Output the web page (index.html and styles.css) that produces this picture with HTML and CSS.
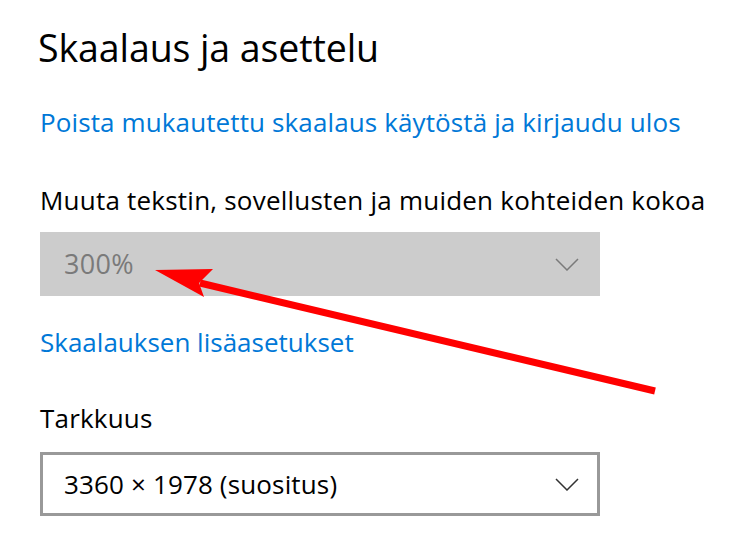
FILE: index.html
```html
<!DOCTYPE html>
<html lang="fi">
<head>
<meta charset="utf-8">
<title>Skaalaus ja asettelu</title>
<link rel="stylesheet" href="styles.css">
</head>
<body>
<main class="page">
  <h1 class="title">Skaalaus ja asettelu</h1>
  <a class="link link-first" href="#">Poista mukautettu skaalaus käytöstä ja kirjaudu ulos</a>
  <div class="label label-scale">Muuta tekstin, sovellusten ja muiden kohteiden kokoa</div>
  <div class="select select-disabled">
    <span class="select-value">300%</span>
    <svg class="chevron" viewBox="0 0 24 13" width="24" height="13"><path d="M1 1 L12 12 L23 1" fill="none" stroke="currentColor" stroke-width="1.5"/></svg>
  </div>
  <a class="link link-second" href="#">Skaalauksen lisäasetukset</a>
  <div class="label label-res">Tarkkuus</div>
  <div class="select select-bordered">
    <span class="select-value">3360 × 1978 (suositus)</span>
    <svg class="chevron" viewBox="0 0 24 13" width="24" height="13"><path d="M1 1 L12 12 L23 1" fill="none" stroke="currentColor" stroke-width="1.5"/></svg>
  </div>
</main>
<svg class="annotation" width="743" height="555" viewBox="0 0 743 555">
  <line x1="200" y1="283" x2="655" y2="391" stroke="#ff0000" stroke-width="7"/>
  <polygon points="155,270 213,269 199,283 204,297" fill="#ff0000"/>
</svg>
</body>
</html>
```
FILE: styles.css
```css
html, body {
  margin: 0;
  padding: 0;
  background: #ffffff;
}
body {
  width: 743px;
  height: 555px;
  overflow: hidden;
  position: relative;
  font-family: "Open Sans", "Noto Sans", sans-serif;
}
.page {
  display: flex;
  flex-direction: column;
  align-items: flex-start;
  padding: 23px 0 0 40px;
}
.title {
  margin: 0 0 0 -2px;
  font-size: 37.5px;
  font-weight: 400;
  line-height: 50px;
  color: #000000;
  letter-spacing: -0.1px;
}
.link {
  color: #0078d7;
  text-decoration: none;
  font-size: 26px;
  line-height: 36px;
}
.link-first {
  margin-top: 31px;
  letter-spacing: 0.12px;
}
.label {
  font-size: 26px;
  line-height: 36px;
  color: #000000;
}
.label-scale {
  margin-top: 42px;
  letter-spacing: 0.22px;
}
.select {
  box-sizing: border-box;
  width: 560px;
  height: 64px;
  display: flex;
  align-items: center;
  justify-content: space-between;
  padding: 0 21px 0 24px;
  font-size: 26px;
  line-height: 36px;
}
.select-disabled {
  margin-top: 14px;
  background: #cccccc;
  color: #7a7a7a;
}
.select-disabled .select-value {
  font-size: 27px;
  letter-spacing: 0.3px;
}
.select-disabled .chevron {
  color: #7a7a7a;
}
.select-bordered {
  margin-top: 16px;
  border: 3px solid #999999;
  padding-left: 21px;
  padding-right: 18px;
  color: #000000;
}
.select-bordered .select-value {
  letter-spacing: 0.15px;
}
.select-bordered .chevron {
  color: #333333;
}
.link-second {
  margin-top: 28px;
  letter-spacing: 0;
}
.label-res {
  margin-top: 40px;
  letter-spacing: 0.2px;
}
.annotation {
  position: absolute;
  left: 0;
  top: 0;
  pointer-events: none;
}
```
